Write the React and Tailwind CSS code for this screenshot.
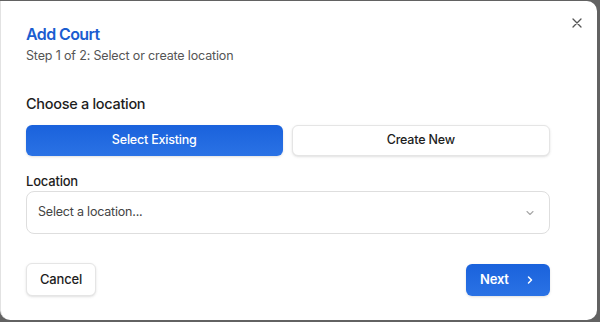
import React from "react";

export default function App() {
  return (
    <div className="w-[600px] h-[322px] bg-[#626262] overflow-hidden" style={{ fontFamily: "Inter, 'Noto Sans', sans-serif" }}>
      <div className="relative w-[597px] h-[319px] mt-[1px] bg-white border-l border-[#e2e2e2] rounded-tr-[10px] rounded-b-[10px] pl-[25px] pt-[23px]">
        <button className="absolute right-[14px] top-[16px] text-[#555]">
          <svg width="12" height="12" viewBox="0 0 12 12" fill="none" stroke="currentColor" strokeWidth="1.3" strokeLinecap="round">
            <path d="M2 2L10 10M10 2L2 10" />
          </svg>
        </button>
        <h2 className="text-[16px] leading-[20px] font-semibold tracking-[-0.6px] text-[#1b5dd0]">Add Court</h2>
        <p className="mt-[3px] text-[12.5px] leading-[18px] tracking-[-0.15px] text-[#555]">Step 1 of 2: Select or create location</p>
        <div className="w-[524px]">
          <h3 className="mt-[29px] text-[14.5px] leading-[20px] font-medium tracking-[-0.3px] text-[#1d1d1d]">Choose a location</h3>
          <div className="mt-[11px] flex gap-[9px]">
            <button className="flex-1 h-[31px] rounded-[6px] bg-gradient-to-b from-[#1a62dc] to-[#2a72e5] text-white text-[12.5px] tracking-[-0.2px] font-medium shadow-sm">Select Existing</button>
            <button className="flex-1 h-[31px] rounded-[6px] border border-[#e5e5e5] bg-white text-[#1d1d1d] text-[12.5px] tracking-[-0.2px] font-medium shadow-sm">Create New</button>
          </div>
          <label className="block mt-[16px] text-[13px] leading-[18px] font-medium tracking-[-0.2px] text-[#1d1d1d]">Location</label>
          <div className="mt-[1px] h-[43px] rounded-[8px] border border-[#dedede] flex items-center justify-between pl-[11px] pr-[14px]">
            <span className="text-[12.5px] tracking-[-0.2px] text-[#444]">Select a location...</span>
            <svg width="10" height="10" viewBox="0 0 10 10" fill="none" stroke="#a8a8a8" strokeWidth="1.1" strokeLinecap="round" strokeLinejoin="round">
              <path d="M2 3.5L5 6.5L8 3.5" />
            </svg>
          </div>
          <div className="mt-[29px] flex justify-between items-center">
            <button className="h-[33px] w-[70px] rounded-[6px] border border-[#e5e5e5] bg-white text-[13px] tracking-[-0.2px] font-medium text-[#1d1d1d] shadow-sm">Cancel</button>
            <button className="h-[32px] w-[84px] rounded-[6px] bg-gradient-to-b from-[#1a62dc] to-[#2a72e5] text-white text-[13px] tracking-[-0.2px] font-semibold shadow-sm flex items-center pl-[14px]">
              <span>Next</span>
              <svg className="ml-[16px]" width="10" height="10" viewBox="0 0 10 10" fill="none" stroke="white" strokeWidth="1.5" strokeLinecap="round" strokeLinejoin="round">
                <path d="M3.5 2L6.5 5L3.5 8" />
              </svg>
            </button>
          </div>
        </div>
      </div>
    </div>
  );
}
